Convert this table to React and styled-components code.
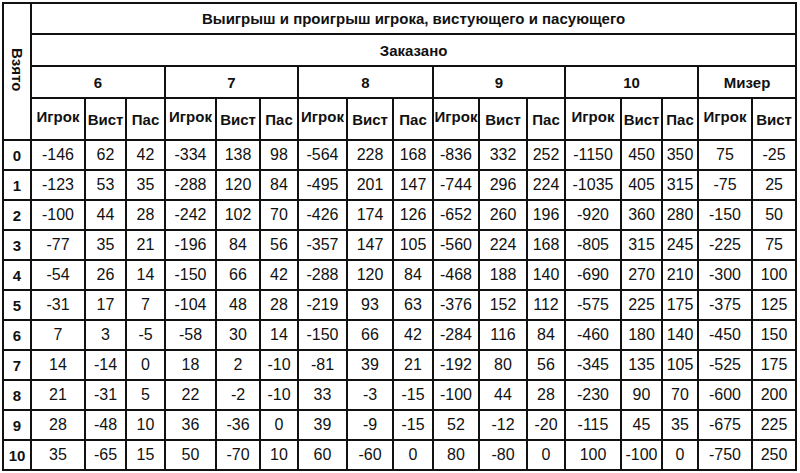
import React from "react";
import styled, { createGlobalStyle } from "styled-components";

const GlobalStyle = createGlobalStyle`
	html, body {
		margin: 0;
		padding: 0;
		background: #fff;
	}
	body {
		font-family: "Liberation Sans", Arial, sans-serif;
		color: #111;
	}
`;

const widths = [28, 54, 41, 39, 51, 44, 38, 49, 46, 40, 46, 48, 38, 56, 41, 36, 54, 44];

const groups = [
	{ label: "6", span: 3 },
	{ label: "7", span: 3 },
	{ label: "8", span: 3 },
	{ label: "9", span: 3 },
	{ label: "10", span: 3 },
	{ label: "Мизер", span: 2 },
];

const rows = [
	[0, -146, 62, 42, -334, 138, 98, -564, 228, 168, -836, 332, 252, -1150, 450, 350, 75, -25],
	[1, -123, 53, 35, -288, 120, 84, -495, 201, 147, -744, 296, 224, -1035, 405, 315, -75, 25],
	[2, -100, 44, 28, -242, 102, 70, -426, 174, 126, -652, 260, 196, -920, 360, 280, -150, 50],
	[3, -77, 35, 21, -196, 84, 56, -357, 147, 105, -560, 224, 168, -805, 315, 245, -225, 75],
	[4, -54, 26, 14, -150, 66, 42, -288, 120, 84, -468, 188, 140, -690, 270, 210, -300, 100],
	[5, -31, 17, 7, -104, 48, 28, -219, 93, 63, -376, 152, 112, -575, 225, 175, -375, 125],
	[6, 7, 3, -5, -58, 30, 14, -150, 66, 42, -284, 116, 84, -460, 180, 140, -450, 150],
	[7, 14, -14, 0, 18, 2, -10, -81, 39, 21, -192, 80, 56, -345, 135, 105, -525, 175],
	[8, 21, -31, 5, 22, -2, -10, 33, -3, -15, -100, 44, 28, -230, 90, 70, -600, 200],
	[9, 28, -48, 10, 36, -36, 0, 39, -9, -15, 52, -12, -20, -115, 45, 35, -675, 225],
	[10, 35, -65, 15, 50, -70, 10, 60, -60, 0, 80, -80, 0, 100, -100, 0, -750, 250],
];

const App = () => {
	const subheads = [];
	groups.forEach((g) => {
		subheads.push("Игрок", "Вист");
		if (g.span === 3) subheads.push("Пас");
	});

	return (
		<Sheet>
			<GlobalStyle />
			<Grid>
				<colgroup>
					{widths.map((w, i) => (
						<col key={i} style={{ width: w }} />
					))}
				</colgroup>
				<thead>
					<HeadRow $height={31}>
						<SideHead rowSpan={4}>
							<span>Взято</span>
						</SideHead>
						<Head colSpan={17}>Выигрыш и проигрыш игрока, вистующего и пасующего</Head>
					</HeadRow>
					<HeadRow $height={32}>
						<Head colSpan={17}>Заказано</Head>
					</HeadRow>
					<HeadRow $height={32}>
						{groups.map((g) => (
							<Head key={g.label} colSpan={g.span}>
								{g.label}
							</Head>
						))}
					</HeadRow>
					<HeadRow $height={42}>
						{subheads.map((s, i) => (
							<SubHead key={i} $raised={s === "Игрок"}>
								{s}
							</SubHead>
						))}
					</HeadRow>
				</thead>
				<tbody>
					{rows.map(([taken, ...values]) => (
						<DataRow key={taken}>
							<RowHead>{taken}</RowHead>
							{values.map((v, i) => (
								<Cell key={i}>{v}</Cell>
							))}
						</DataRow>
					))}
				</tbody>
			</Grid>
		</Sheet>
	);
};

export default App;

const Sheet = styled.div`
	padding: 2px 0 0 2px;
`;

const Grid = styled.table`
	border-collapse: collapse;
	table-layout: fixed;
	width: 795px;
	border: 2px solid #111;

	th,
	td {
		border: 2px solid #111;
		padding: 0;
		text-align: center;
		vertical-align: middle;
	}
`;

const HeadRow = styled.tr`
	height: ${({ $height }) => $height}px;
`;

const Head = styled.th`
	font-size: 15px;
	font-weight: bold;
`;

const SideHead = styled.th`
	font-size: 15px;
	font-weight: bold;

	span {
		display: inline-block;
		writing-mode: vertical-rl;
	}
`;

const SubHead = styled.th`
	font-size: 15px;
	font-weight: bold;
	white-space: nowrap;
	padding-bottom: ${({ $raised }) => ($raised ? "6px" : "0")} !important;
`;

const DataRow = styled.tr`
	height: 30px;
`;

const RowHead = styled.th`
	font-size: 15px;
	font-weight: bold;
`;

const Cell = styled.td`
	font-size: 16px;
	font-weight: normal;
`;
